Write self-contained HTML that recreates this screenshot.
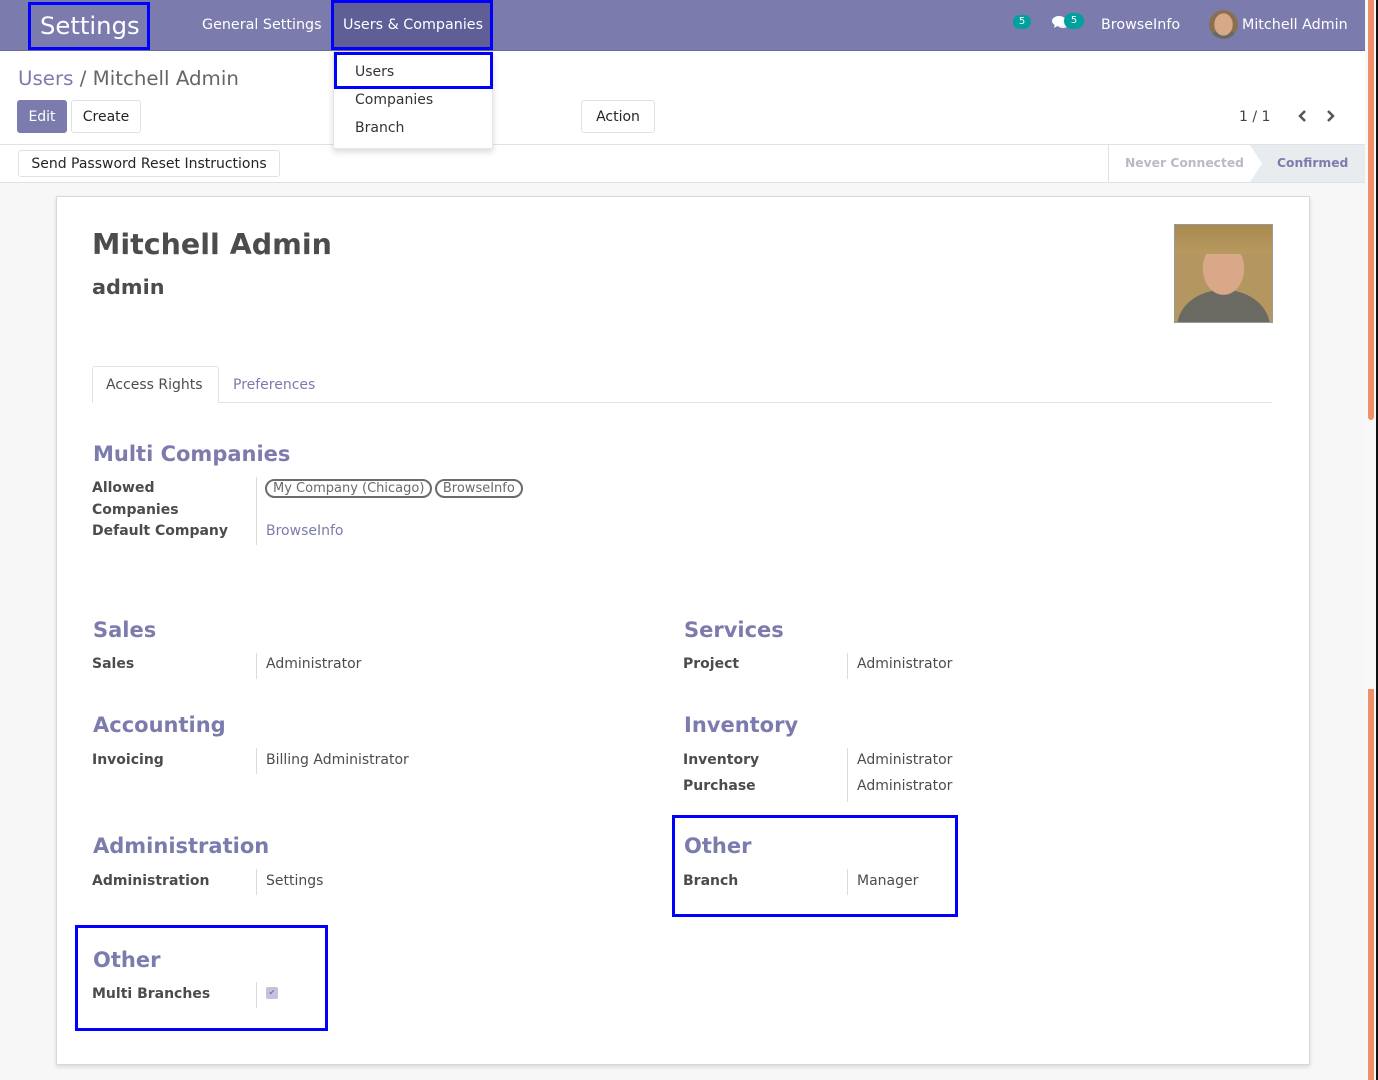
<!DOCTYPE html>
<html><head><meta charset="utf-8"><style>
*{box-sizing:border-box;margin:0;padding:0}
body{width:1378px;height:1080px;overflow:hidden;position:relative;font-family:"DejaVu Sans","Liberation Sans",sans-serif;font-size:14px;color:#4c4c4c;background:#fff}
.a{position:absolute;white-space:nowrap}
.t{margin-top:1px}
.nav{left:0;top:0;width:1365px;height:51px;background:#7c7bad;border-bottom:1px solid #6a699a}
.w{color:#fff}
.blue{position:absolute;border:3px solid #0000ff}
.btn{position:absolute;border:1px solid #dee2e6;border-radius:3px;background:#fff;color:#212529;font-size:14px;text-align:center}
.h{color:#7c7bad;font-weight:bold;font-size:21px;margin-top:2px}
.lb{font-weight:bold;color:#4c4c4c;font-size:14px;margin-top:1px}
.v{color:#4c4c4c;font-size:14px;margin-top:1px}
.sep{position:absolute;width:1px;background:#dcdcdc}
.tag{display:inline-block;border:2px solid #6b6b6b;border-radius:10px;padding:0 6px;line-height:15px;font-size:13px;color:#6b6b6b}
</style></head><body>
<div class="a nav"></div>
<div class="a" style="left:331px;top:0;width:161px;height:50px;background:#5f5e97"></div>
<div class="a w" style="left:40px;top:11px;font-size:24.3px">Settings</div>
<div class="blue" style="left:28px;top:2px;width:122px;height:48px"></div>
<div class="a w" style="left:202px;top:17px;font-size:14.3px">General Settings</div>
<div class="a w" style="left:343px;top:17px;font-size:14.3px">Users &amp; Companies</div>
<div class="blue" style="left:331px;top:0;width:162px;height:50px"></div>
<div class="a" style="left:1013px;top:15px;width:18px;height:14px;border-radius:7px;background:#00a09d;color:#fff;font-size:10px;text-align:center;line-height:14px">5</div>
<svg class="a" style="left:1052px;top:15px" width="18" height="16" viewBox="0 0 18 16"><ellipse cx="7" cy="6" rx="7" ry="5" fill="#fff"/><path d="M3 9 L2 13 L7 10Z" fill="#fff"/><ellipse cx="11" cy="9" rx="6" ry="4" fill="#fff" opacity=".9"/></svg>
<div class="a" style="left:1064px;top:13px;width:20px;height:16px;border-radius:8px;background:#00a09d;color:#fff;font-size:10px;text-align:center;line-height:16px">5</div>
<div class="a w" style="left:1101px;top:17px;font-size:14.3px">BrowseInfo</div>
<div class="a" style="left:1209px;top:10px;width:29px;height:29px;border-radius:50%;background:radial-gradient(ellipse 35% 42% at 50% 50%,#d9a888 0 90%,transparent 92%),radial-gradient(ellipse 50% 40% at 50% 105%,#6b6a62 0 95%,transparent 96%),#8a7050"></div>
<div class="a w" style="left:1242px;top:17px;font-size:14.3px">Mitchell Admin</div>

<div class="a t" style="left:18px;top:66px;font-size:19.8px;color:#7c7bad">Users <span style="color:#666">/ Mitchell Admin</span></div>
<div class="btn" style="left:17px;top:100px;width:50px;height:33px;background:#7c7bad;border-color:#7c7bad;color:#fff;line-height:33px">Edit</div>
<div class="btn" style="left:71px;top:100px;width:70px;height:33px;line-height:33px">Create</div>
<div class="btn" style="left:581px;top:100px;width:74px;height:33px;line-height:33px">Action</div>
<div class="a t" style="left:1239px;top:108px;font-size:14px;color:#444">1 / 1</div>
<svg class="a" style="left:1295px;top:109px" width="44" height="14"><path d="M10 2 L5 7 L10 12" stroke="#555" stroke-width="2.5" fill="none"/><path d="M33 2 L38 7 L33 12" stroke="#555" stroke-width="2.5" fill="none"/></svg>
<div class="a" style="left:0;top:144px;width:1365px;height:1px;background:#dee2e6"></div>
<div class="btn" style="left:18px;top:150px;width:262px;height:27px;line-height:27px;font-size:14px">Send Password Reset Instructions</div>
<div class="a" style="left:1108px;top:145px;width:257px;height:37px;border-left:1px solid #dee2e6"></div>
<div class="a" style="left:1250px;top:145px;width:115px;height:37px;background:#e9ecef;clip-path:polygon(0 0,100% 0,100% 100%,0 100%,12px 50%)"></div>
<div class="a" style="left:1125px;top:156px;font-size:12.3px;font-weight:bold;color:#b8bcc2">Never Connected</div>
<div class="a" style="left:1277px;top:156px;font-size:12.3px;font-weight:bold;color:#7c7bad">Confirmed</div>
<div class="a" style="left:0;top:182px;width:1365px;height:898px;background:#f7f7f7;border-top:1px solid #dee2e6"></div>

<div class="a" style="left:333px;top:51px;width:160px;height:98px;background:#fff;box-shadow:0 3px 6px rgba(0,0,0,.15);border:1px solid #e5e5e5"></div>
<div class="a t" style="left:355px;top:63px;font-size:14px;color:#333">Users</div>
<div class="a t" style="left:355px;top:91px;font-size:14px;color:#333">Companies</div>
<div class="a t" style="left:355px;top:119px;font-size:14px;color:#333">Branch</div>
<div class="blue" style="left:334px;top:52px;width:159px;height:37px"></div>

<div class="a" style="left:56px;top:196px;width:1254px;height:869px;background:#fff;border:1px solid #d8d8d8;box-shadow:0 2px 4px rgba(0,0,0,.12)"></div>
<div class="a" style="left:92px;top:228px;font-size:28.5px;font-weight:bold;color:#4c4c4c">Mitchell Admin</div>
<div class="a" style="left:92px;top:275px;font-size:20.8px;font-weight:bold;color:#4c4c4c">admin</div>
<div class="a" style="left:1174px;top:224px;width:99px;height:99px;border:1px solid #999;background:linear-gradient(180deg,#a88a50 0,#b89a60 30%,transparent 30%),radial-gradient(ellipse 30% 38% at 50% 45%,#d9a888 0 70%,transparent 72%),radial-gradient(ellipse 50% 40% at 50% 105%,#6b6a62 0 95%,transparent 96%),#b49660"></div>
<div class="a" style="left:92px;top:402px;width:1180px;height:1px;background:#dee2e6"></div>
<div class="a" style="left:92px;top:366px;width:127px;height:37px;background:#fff;border:1px solid #dee2e6;border-bottom:none;border-radius:3px 3px 0 0"></div>
<div class="a t" style="left:106px;top:376px;color:#4c4c4c">Access Rights</div>
<div class="a t" style="left:233px;top:376px;color:#7c7bad">Preferences</div>

<div class="a h" style="left:93px;top:440px">Multi Companies</div>
<div class="a lb" style="left:92px;top:479px">Allowed</div>
<div class="a lb" style="left:92px;top:501px">Companies</div>
<div class="a lb" style="left:92px;top:522px">Default Company</div>
<div class="sep" style="left:256px;top:477px;height:68px"></div>
<div class="a" style="left:265px;top:479px"><span class="tag">My Company (Chicago)</span> <span class="tag" style="margin-left:-2px">BrowseInfo</span></div>
<div class="a v" style="left:266px;top:522px;color:#7c7bad">BrowseInfo</div>

<div class="a h" style="left:93px;top:616px">Sales</div>
<div class="a lb" style="left:92px;top:655px">Sales</div>
<div class="sep" style="left:256px;top:653px;height:26px"></div>
<div class="a v" style="left:266px;top:655px">Administrator</div>

<div class="a h" style="left:684px;top:616px">Services</div>
<div class="a lb" style="left:683px;top:655px">Project</div>
<div class="sep" style="left:847px;top:653px;height:26px"></div>
<div class="a v" style="left:857px;top:655px">Administrator</div>

<div class="a h" style="left:93px;top:711px">Accounting</div>
<div class="a lb" style="left:92px;top:751px">Invoicing</div>
<div class="sep" style="left:256px;top:748px;height:26px"></div>
<div class="a v" style="left:266px;top:751px">Billing Administrator</div>

<div class="a h" style="left:684px;top:711px">Inventory</div>
<div class="a lb" style="left:683px;top:751px">Inventory</div>
<div class="a lb" style="left:683px;top:777px">Purchase</div>
<div class="sep" style="left:847px;top:748px;height:54px"></div>
<div class="a v" style="left:857px;top:751px">Administrator</div>
<div class="a v" style="left:857px;top:777px">Administrator</div>

<div class="a h" style="left:93px;top:832px">Administration</div>
<div class="a lb" style="left:92px;top:872px">Administration</div>
<div class="sep" style="left:256px;top:869px;height:26px"></div>
<div class="a v" style="left:266px;top:872px">Settings</div>

<div class="a h" style="left:684px;top:832px">Other</div>
<div class="a lb" style="left:683px;top:872px">Branch</div>
<div class="sep" style="left:847px;top:869px;height:26px"></div>
<div class="a v" style="left:857px;top:872px">Manager</div>
<div class="blue" style="left:672px;top:815px;width:286px;height:102px"></div>

<div class="a h" style="left:93px;top:946px">Other</div>
<div class="a lb" style="left:92px;top:985px">Multi Branches</div>
<div class="sep" style="left:256px;top:982px;height:26px"></div>
<div class="a" style="left:266px;top:987px;width:12px;height:12px;border-radius:2px;background:#c4c3dd;color:#7c7bad;font-size:8px;text-align:center;line-height:12px">✔</div>
<div class="blue" style="left:75px;top:925px;width:253px;height:106px"></div>

<div class="a" style="left:1365px;top:0;width:13px;height:1080px;background:#f8f8f8"></div>
<div class="a" style="left:1368px;top:0;width:6px;height:420px;background:#f0906a;border-radius:0 0 3px 3px"></div>
<div class="a" style="left:1368px;top:689px;width:6px;height:391px;background:#f0906a"></div>
<div class="a" style="left:1376px;top:0;width:2px;height:1080px;background:#111"></div>
</body></html>
